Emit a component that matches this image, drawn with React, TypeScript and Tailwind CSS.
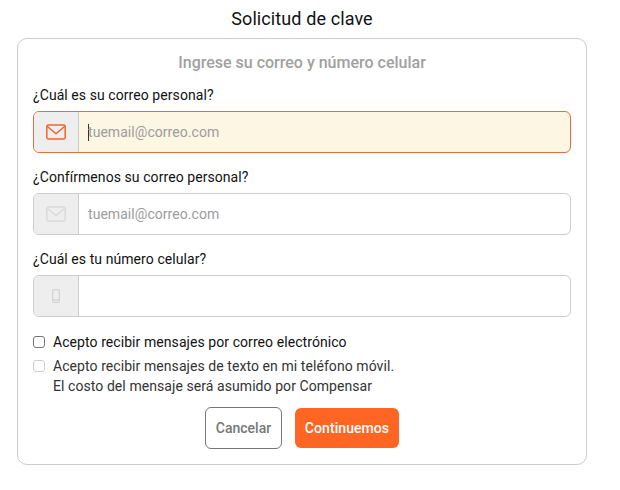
import React from "react";

function Mail({ color }: { color: string }) {
  return (
    <svg width="20" height="16" viewBox="0 0 20 16" fill="none" stroke={color} strokeWidth="1.5" strokeLinejoin="round">
      <rect x="0.8" y="0.9" width="18.4" height="14.2" rx="1.6" />
      <path d="M1.2 2.2 L10 9.8 L18.8 2.2" />
    </svg>
  );
}

function Phone() {
  return (
    <svg width="8" height="14" viewBox="0 0 8 14" fill="none" stroke="#d2d2d2" strokeWidth="1.2">
      <rect x="0.7" y="0.7" width="6.6" height="12.6" rx="1.2" />
      <path d="M0.7 10.8 H7.3" />
    </svg>
  );
}

function Field({
  label,
  icon,
  placeholder,
  active,
}: {
  label: string;
  icon: React.ReactNode;
  placeholder?: string;
  active?: boolean;
}) {
  return (
    <div className="flex flex-col">
      <label className="text-[14px] leading-[20px] tracking-[0.07px] text-[#111] mb-[6px]">{label}</label>
      <div
        className={
          active
            ? "flex h-[42px] rounded-[6px] border border-[#e2703a] bg-[#fdf6e3] overflow-hidden"
            : "flex h-[42px] rounded-[6px] border border-[#cccccc] bg-white overflow-hidden"
        }
      >
        <div className="w-[45px] shrink-0 flex items-center justify-center bg-[#eeeeee] border-r border-[#cccccc]">
          {icon}
        </div>
        <div className="flex-1 flex items-center pl-[9px] text-[14px] tracking-[0.05px] text-[#9c9c9c]">
          {active && <span className="w-px h-[17px] bg-[#333] -mr-px" />}
          {placeholder}
        </div>
      </div>
    </div>
  );
}

export default function App() {
  return (
    <div className="w-[620px] h-[490px] bg-white font-['Roboto',sans-serif] overflow-hidden">
      <div className="w-[570px] ml-[17px]">
        <h1 className="h-[38px] flex items-center justify-center text-[18px] font-normal text-[#111] pb-[1px] tracking-[0.1px]">
          Solicitud de clave
        </h1>
        <div className="h-[427px] border border-[#cccccc] rounded-[10px] px-[15px] flex flex-col">
          <h2 className="text-center text-[16px] leading-[20px] font-medium text-[#a0a0a0] mt-[14px] mb-[12px]">
            Ingrese su correo y número celular
          </h2>
          <div className="flex flex-col gap-[14px]">
            <Field label="¿Cuál es su correo personal?" icon={<Mail color="#f0642d" />} placeholder="tuemail@correo.com" active />
            <Field label="¿Confírmenos su correo personal?" icon={<Mail color="#dadada" />} placeholder="tuemail@correo.com" />
            <Field label="¿Cuál es tu número celular?" icon={<Phone />} />
          </div>
          <div className="mt-[15px] flex items-center gap-[8px] text-[14px] leading-[20px] tracking-[0.07px] text-[#111]">
            <span className="w-[12px] h-[12px] rounded-[3px] border border-[#767676] bg-white shrink-0" />
            <span>Acepto recibir mensajes por correo electrónico</span>
          </div>
          <div className="mt-[4px] flex items-start gap-[8px] text-[14px] leading-[20px] tracking-[0.07px] text-[#333]">
            <span className="w-[12px] h-[12px] mt-[4px] rounded-[3px] border border-[#cfcfcf] bg-white shrink-0" />
            <span>
              Acepto recibir mensajes de texto en mi teléfono móvil.
              <br />
              El costo del mensaje será asumido por Compensar
            </span>
          </div>
          <div className="mt-[11px] flex justify-center items-center gap-[13px]">
            <button className="w-[77px] h-[42px] rounded-[6px] border border-[#767676] bg-white text-[14px] font-medium text-[#777]">
              Cancelar
            </button>
            <button className="w-[104px] h-[40px] rounded-[6px] bg-[#ff6624] text-[14px] tracking-[0.07px] font-medium text-white">
              Continuemos
            </button>
          </div>
        </div>
      </div>
    </div>
  );
}
